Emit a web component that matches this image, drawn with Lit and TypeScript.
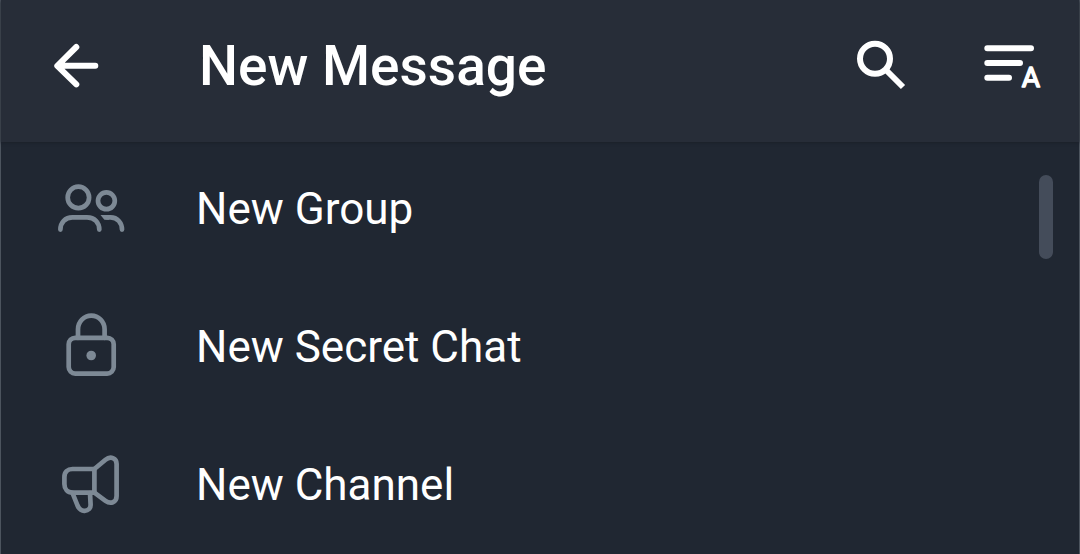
import { LitElement, html, css, svg } from "lit";
import { customElement, property } from "lit/decorators.js";

const groupIcon = svg`
  <circle cx="22.4" cy="24.4" r="10.7" />
  <circle cx="50.4" cy="27.8" r="8.4" />
  <path d="M4.4 56.6C4.4 49.5 9.2 44.4 16.4 44.4H31C38.6 44.4 43.3 49.5 43.3 56.6" />
  <path d="M51 44.4H54.5C61.5 44.4 66 50 66 56.6" />
  <path d="M44.5 42.1H53V46.8H48.4Z" fill="currentColor" stroke="none" />`;

const lockIcon = svg`
  <rect x="12.7" y="26.8" width="45" height="35.8" rx="6.5" />
  <path d="M22 26.8V18.2A13.2 13.5 0 0 1 48.6 18.2V26.8" />
  <circle cx="35.2" cy="44.5" r="4.8" fill="currentColor" stroke="none" />`;

const channelIcon = svg`
  <path d="M38.4 20H16.5C11.5 20 8.4 23 8.4 28V35C8.4 40 11.5 43.6 16.5 43.6H38.4Z" />
  <path d="M38.4 20L49.5 10.8C54.5 6.5 60.6 9.2 60.6 15V47C60.6 53.5 54.5 55.5 49.5 51.8L38.4 43.6" />
  <path d="M16.5 44L21.5 56.5C23.3 60.5 25.5 62 28.6 61.8C32.5 61.5 34.8 59 34.6 55.5L34 44" />`;

@customElement("menu-item")
export class MenuItem extends LitElement {
  @property() label = "";
  @property({ attribute: false }) icon: unknown;

  static styles = css`
    :host {
      display: block;
    }
    .item {
      display: flex;
      align-items: center;
      gap: 70px;
      width: 100%;
      height: 88px;
      padding: 0 55px;
      border: 0;
      background: none;
      color: #fff;
      font: 400 44px/56px Roboto, sans-serif;
      text-align: left;
      cursor: pointer;
    }
    .label {
      padding-top: 2px;
    }
    .icon {
      flex: none;
      width: 70px;
      height: 70px;
      color: #7d8995;
      fill: none;
      stroke: currentColor;
      stroke-width: 4.7;
      stroke-linecap: round;
      stroke-linejoin: round;
    }
  `;

  render() {
    return html`<button class="item" type="button">
      <svg class="icon" viewBox="0 0 70 70" aria-hidden="true">${this.icon}</svg>
      <span class="label">${this.label}</span>
    </button>`;
  }
}

@customElement("app-root")
export class AppRoot extends LitElement {
  static styles = css`
    :host {
      display: block;
      box-sizing: border-box;
      min-height: 100vh;
      border: solid #4c545e;
      border-width: 0 1px;
      background: #202732;
      color: #fff;
      font-family: Roboto, sans-serif;
    }
    .bar {
      display: flex;
      align-items: center;
      box-sizing: border-box;
      height: 142px;
      padding: 0 37px 10px 51px;
      background: #272d38;
      box-shadow: 0 1px 3px #1b2029;
    }
    .title {
      flex: 1;
      margin: 0 0 0 99px;
      font-size: 55px;
      line-height: 64px;
      font-weight: 500;
    }
    .action {
      display: flex;
      padding: 0;
      border: 0;
      background: none;
      color: #fff;
      cursor: pointer;
    }
    .action + .action {
      margin-left: 74px;
    }
    .glyph {
      fill: none;
      stroke: currentColor;
      stroke-width: 6;
    }
    .round {
      stroke-linecap: round;
      stroke-linejoin: round;
    }
    .letter {
      font: 400 28px Roboto, sans-serif;
      fill: currentColor;
      stroke-width: 1.5;
    }
    .content {
      position: relative;
    }
    .list {
      display: flex;
      flex-direction: column;
      gap: 50px;
      margin: 0;
      padding: 22px 0 0;
      list-style: none;
    }
    .thumb {
      position: absolute;
      top: 33px;
      right: 26px;
      width: 14px;
      height: 84px;
      border-radius: 7px;
      background: #444c5a;
    }
  `;

  private items = [
    { label: "New Group", icon: groupIcon },
    { label: "New Secret Chat", icon: lockIcon },
    { label: "New Channel", icon: channelIcon },
  ];

  render() {
    return html`
      <header class="bar">
        <button class="action" type="button" aria-label="Back">
          <svg class="glyph round" width="48" height="48" viewBox="0 0 48 48">
            <path d="M43.3 23.8H6M24.3 5L5.3 23.8L24.3 42.4" />
          </svg>
        </button>
        <h1 class="title">New Message</h1>
        <button class="action" type="button" aria-label="Search">
          <svg class="glyph" width="52" height="52" viewBox="0 0 52 52">
            <circle cx="19" cy="18.8" r="15" />
            <path d="M30.5 30.5L47 47" />
          </svg>
        </button>
        <button class="action" type="button" aria-label="Sort by name">
          <svg class="glyph round" width="60" height="60" viewBox="0 0 60 60">
            <path d="M5.3 12.3H49M5.3 27H38M5.3 41.7H27" />
            <text class="letter" x="48.8" y="51" text-anchor="middle">A</text>
          </svg>
        </button>
      </header>
      <main class="content">
        <ul class="list">
          ${this.items.map(
            (item) => html`<li><menu-item .label=${item.label} .icon=${item.icon}></menu-item></li>`
          )}
        </ul>
        <div class="thumb"></div>
      </main>
    `;
  }
}
